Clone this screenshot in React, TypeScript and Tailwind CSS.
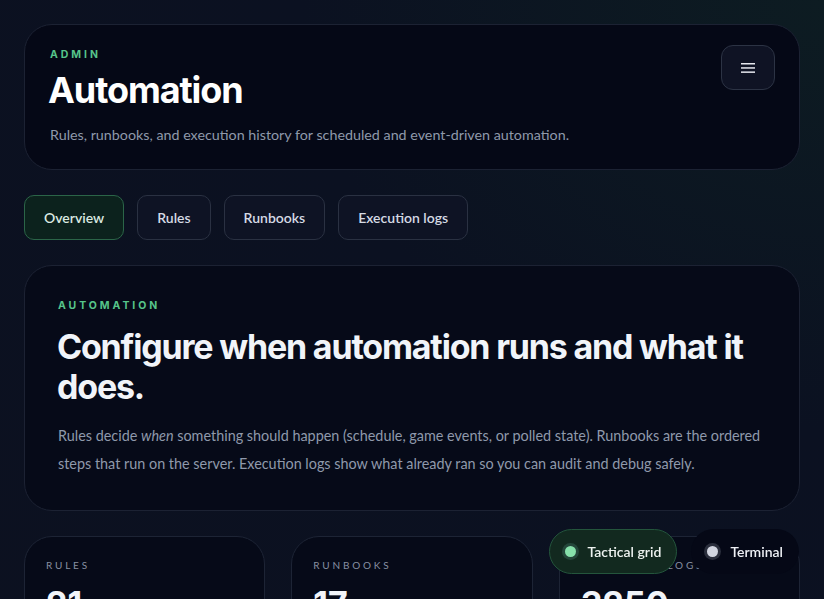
import React from "react";

const head = { fontFamily: "Inter, 'Noto Sans', sans-serif" };
const body = { fontFamily: "Lato, 'Noto Sans', sans-serif" };

function Tab({ label, active }: { label: string; active?: boolean }) {
  return (
    <button
      className={
        "h-[45px] rounded-[10px] border px-[19px] text-[14px] font-semibold " +
        (active
          ? "border-[#2b6548] bg-[#0c221d] text-[#dbe9e1]"
          : "border-[#2a3142] bg-[#0e1324] text-[#d5dae4]")
      }
    >
      {label}
    </button>
  );
}

function Stat({ label, value }: { label: string; value: string }) {
  return (
    <div className="rounded-[28px] border border-[#1d2435] bg-[#060a18] px-[21px] pt-[22px] pb-6">
      <div className="text-[10px] leading-[12px] tracking-[0.28em] text-[#8790a2]">{label}</div>
      <div className="mt-[13px] text-[34px] font-bold leading-[40px] text-[#f1f4f9]" style={head}>
        {value}
      </div>
    </div>
  );
}

export default function App() {
  return (
    <div
      className="min-h-screen bg-[#0b1020] bg-[radial-gradient(ellipse_at_top_right,#0d1c22_0%,#0b1121_45%,#0c1120_100%)] p-6"
      style={body}
    >
      <div className="flex flex-col gap-[25px]">
        <div className="flex items-start justify-between rounded-[28px] border border-[#1c2233] bg-[#050816] pt-[23px] pb-[24px] pl-[25px] pr-6">
          <div>
            <div className="pt-[2px] text-[10.5px] font-bold leading-[10px] tracking-[0.28em] text-[#56c48a]" style={head}>
              ADMIN
            </div>
            <h1 className="mt-[8px] -ml-[2px] text-[36px] font-bold leading-[44px] tracking-[-0.03em] text-white" style={head}>
              Automation
            </h1>
            <p className="mt-[13px] text-[14.3px] leading-5 text-[#8f99ab]">
              Rules, runbooks, and execution history for scheduled and event-driven automation.
            </p>
          </div>
          <button className="mt-[-3px] flex h-[45px] w-[54px] items-center justify-center rounded-[12px] border border-[#2c3344] bg-[#0f1324]">
            <svg width="16" height="12" viewBox="0 0 16 12">
              <rect x="1" y="1" width="14" height="1.5" fill="#e5e7ee" />
              <rect x="1" y="5.2" width="14" height="1.5" fill="#e5e7ee" />
              <rect x="1" y="9.4" width="14" height="1.5" fill="#e5e7ee" />
            </svg>
          </button>
        </div>

        <div className="flex gap-[13px]">
          <Tab label="Overview" active />
          <Tab label="Rules" />
          <Tab label="Runbooks" />
          <Tab label="Execution logs" />
        </div>

        <div className="rounded-[28px] border border-[#1c2233] bg-[#060a18] px-[33px] pt-[35px] pb-[32px]">
          <div className="text-[10.5px] font-bold leading-[10px] tracking-[0.28em] text-[#56c48a]" style={head}>
            AUTOMATION
          </div>
          <h2 className="mt-[16px] -ml-[1px] text-[34px] font-bold leading-[40px] tracking-[-0.035em] text-[#f1f4f9]" style={head}>
            Configure when automation runs and what it does.
          </h2>
          <p className="mt-[15px] text-[14.4px] leading-[28px] text-[#8f99ab]">
            Rules decide <em>when</em> something should happen (schedule, game events, or polled state). Runbooks are the ordered steps that run on the server. Execution logs show what already ran so you can audit and debug safely.
          </p>
        </div>

        <div className="grid grid-cols-3 gap-[26px]">
          <Stat label="RULES" value="21" />
          <Stat label="RUNBOOKS" value="17" />
          <Stat label="EXECUTION LOGS" value="3250" />
        </div>
      </div>

      <div className="fixed bottom-[25px] right-[25px] flex gap-[14px]">
        <button className="flex h-[45px] items-center gap-[9px] rounded-full border border-[#24553c] bg-[#12291f] pl-[12px] pr-[15px] text-[14px] font-semibold text-[#eef3f0]">
          <span className="flex h-[17px] w-[17px] items-center justify-center rounded-full bg-[#24463a]">
            <span className="h-[11px] w-[11px] rounded-full bg-[#86e0aa]" />
          </span>
          Tactical grid
        </button>
        <button className="flex h-[45px] items-center gap-[9px] rounded-full bg-[#050816] pl-[13px] pr-[16px] text-[14px] font-semibold text-[#eef0f5]">
          <span className="flex h-[17px] w-[17px] items-center justify-center rounded-full bg-[#2a2e3c]">
            <span className="h-[11px] w-[11px] rounded-full bg-[#d2d5e0]" />
          </span>
          Terminal
        </button>
      </div>
    </div>
  );
}
